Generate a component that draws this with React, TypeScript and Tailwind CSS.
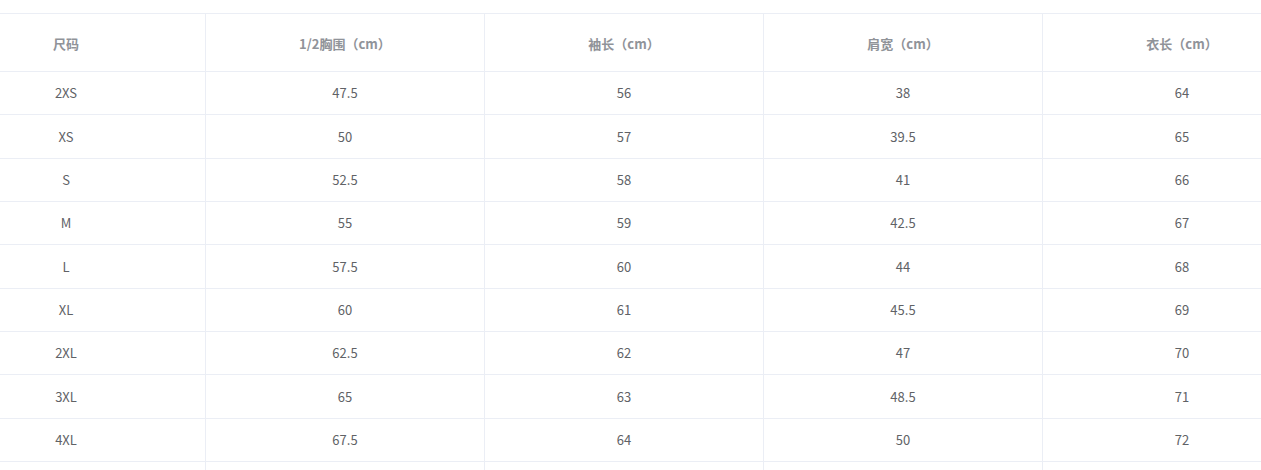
const headers = ['尺码', '1/2胸围（cm）', '袖长（cm）', '肩宽（cm）', '衣长（cm）'];

const rows = [
  ['2XS', '47.5', '56', '38', '64'],
  ['XS', '50', '57', '39.5', '65'],
  ['S', '52.5', '58', '41', '66'],
  ['M', '55', '59', '42.5', '67'],
  ['L', '57.5', '60', '44', '68'],
  ['XL', '60', '61', '45.5', '69'],
  ['2XL', '62.5', '62', '47', '70'],
  ['3XL', '65', '63', '48.5', '71'],
  ['4XL', '67.5', '64', '50', '72'],
];

export default function App() {
  return (
    <div className="w-full h-[470px] overflow-hidden bg-white pt-[13px] font-['Noto_Sans_CJK_SC','Noto_Sans',sans-serif]">
      <table className="table-fixed border-collapse w-[1395px] ml-[-74px] text-[13px]">
        <thead>
          <tr className="h-[58px]">
            {headers.map((h, i) => (
              <th
                key={i}
                className="w-[279px] border border-[#ebeef5] text-center font-bold text-[#909399] pt-[2px]"
              >
                {h}
              </th>
            ))}
          </tr>
        </thead>
        <tbody>
          {rows.map((row, r) => (
            <tr key={r} className="h-[43.33px]">
              {row.map((cell, c) => (
                <td key={c} className="border border-[#ebeef5] text-center text-[#606266]">
                  {cell}
                </td>
              ))}
            </tr>
          ))}
          <tr className="h-[43px]">
            {headers.map((_, c) => (
              <td key={c} className="border border-[#ebeef5]"></td>
            ))}
          </tr>
        </tbody>
      </table>
    </div>
  );
}
